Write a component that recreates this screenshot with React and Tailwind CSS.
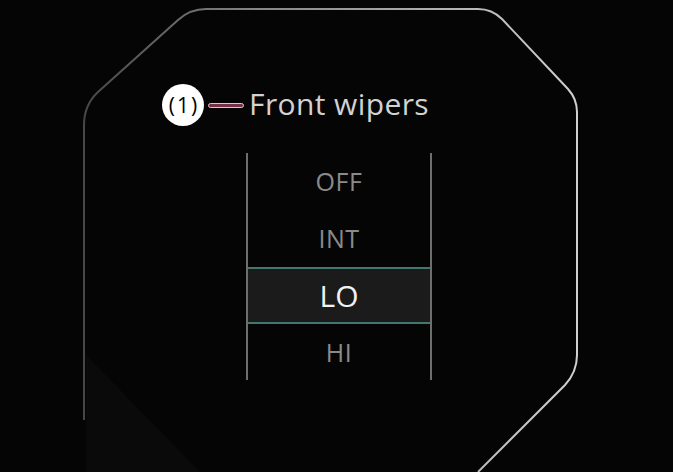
import React from 'react';

const modes = ['OFF', 'INT', 'LO', 'HI'];

function Outline() {
  return (
    <svg className="absolute inset-0" width="673" height="472" viewBox="0 0 673 472">
      <defs>
        <linearGradient id="edge" x1="0" y1="0" x2="1" y2="0">
          <stop offset="0" stopColor="#474747" />
          <stop offset="0.35" stopColor="#858585" />
          <stop offset="1" stopColor="#d0d0d0" />
        </linearGradient>
      </defs>
      {/* faint glare bottom left */}
      <polygon points="86,355 86,472 200,472" fill="#0a0a0a" />
      <path
        d="M 84 420 L 84 125 Q 84 105 98 92 L 178 20 Q 190 9 206 9 L 478 9 Q 492 9 502 19 L 568 89 Q 577 99 577 112 L 577 355 Q 577 372 565 385 L 478 472"
        fill="none"
        stroke="url(#edge)"
        strokeWidth="2"
      />
    </svg>
  );
}

export default function App() {
  return (
    <div className="relative w-[673px] h-[472px] overflow-hidden bg-[#050505]" style={{ fontFamily: '"Open Sans", Lato, sans-serif' }}>
      <Outline />

      <div className="relative flex flex-col pt-[84px]">
        {/* callout label */}
        <div className="flex items-center pl-[162px]">
          <div className="w-[42px] h-[42px] rounded-full bg-white flex items-center justify-center text-black text-[21px] font-medium tracking-[2px] pl-[2px] leading-none">
            (1)
          </div>
          <div className="ml-[4px] w-[36px] h-[5px] rounded-full bg-[#7a2f48] border border-[#e4c4cc]" />
          <span className="ml-[5px] text-[30px] leading-none text-[#d2d2d2] tracking-[0.4px] -mt-[2px]">Front wipers</span>
        </div>

        {/* selector */}
        <div className="ml-[246px] mt-[27px] w-[186px] h-[227px] border-x-2 border-[#6e6e6e] flex flex-col">
          {modes.map((m) => (
            m === 'LO' ? (
              <div key={m} className="h-[57px] shrink-0 border-y-2 border-[#45766b] bg-[#1b1b1b] flex items-center justify-center text-[30px] text-[#f2f2f2] leading-none">
                {m}
              </div>
            ) : (
              <div key={m} className="h-[57px] shrink-0 flex items-center justify-center text-[25px] tracking-[0.5px] text-[#8a8a8a] leading-none">
                {m}
              </div>
            )
          ))}
        </div>
      </div>
    </div>
  );
}
